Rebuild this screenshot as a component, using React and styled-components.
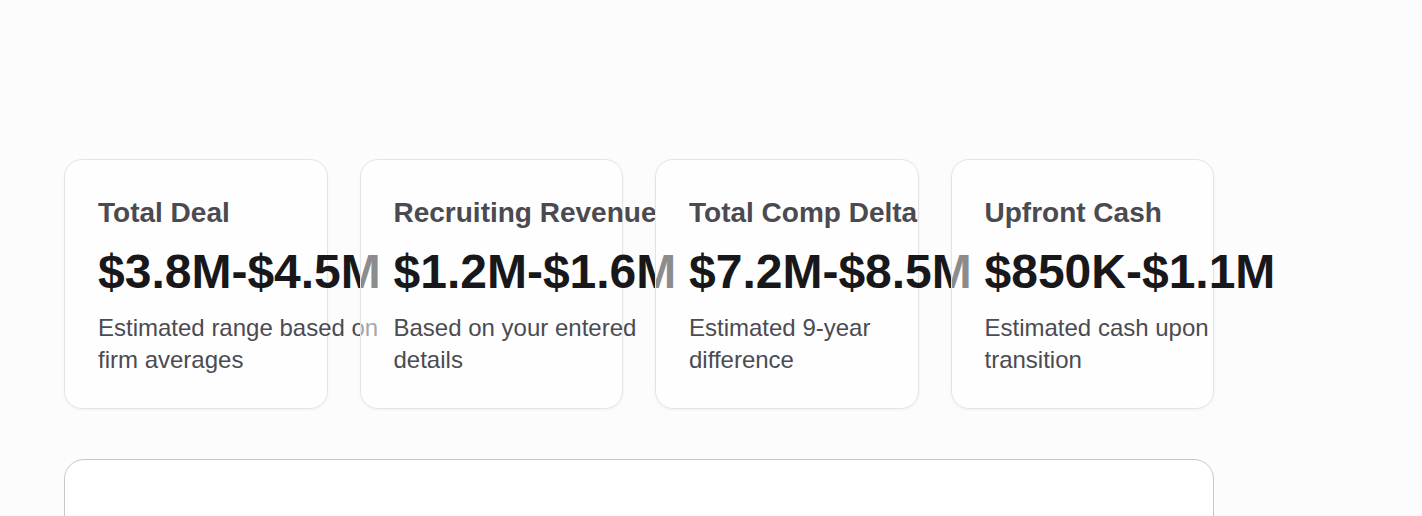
import React from 'react'
import styled, { createGlobalStyle } from 'styled-components'

const GlobalStyle = createGlobalStyle`
  html, body {
    margin: 0;
    padding: 0;
    background: #fcfcfc;
    font-family: "Liberation Sans", Arial, sans-serif;
  }
`

const Page = styled.div`
  height: 516px;
  padding: 159px 0 0 64px;
  box-sizing: border-box;
  overflow: hidden;
`

const Content = styled.div`
  width: 1150px;
  display: flex;
  flex-direction: column;
  gap: 50px;
`

const CardGrid = styled.div`
  display: grid;
  grid-template-columns: repeat(4, 1fr);
  gap: 32px;
`

const StatCard = styled.div`
  min-width: 0;
  height: 250px;
  box-sizing: border-box;
  padding: 35px 33px 0;
  border: 1px solid #e4e4e7;
  border-radius: 18px;
  background: rgba(255, 255, 255, 0.5);
  box-shadow: 0 1px 3px rgba(0, 0, 0, 0.05);
`

const Label = styled.div`
  font-size: 28px;
  line-height: 36px;
  font-weight: 700;
  color: #4a4a50;
  white-space: nowrap;
`

const Value = styled.div`
  margin-top: 13px;
  font-size: 48px;
  line-height: 56px;
  font-weight: 700;
  color: #18181b;
  white-space: nowrap;
`

const Note = styled.p`
  margin: 12px 0 0;
  width: 290px;
  font-size: 24px;
  line-height: 32px;
  color: #4b4b52;
`

const Panel = styled.div`
  height: 120px;
  border: 1.5px solid #c8c8cc;
  border-radius: 20px;
  background: #ffffff;
`

const stats = [
  { label: 'Total Deal', value: '$3.8M-$4.5M', note: 'Estimated range based on firm averages' },
  { label: 'Recruiting Revenue', value: '$1.2M-$1.6M', note: 'Based on your entered details' },
  { label: 'Total Comp Delta', value: '$7.2M-$8.5M', note: 'Estimated 9-year difference' },
  { label: 'Upfront Cash', value: '$850K-$1.1M', note: 'Estimated cash upon transition' },
]

function App() {
  return (
    <>
      <GlobalStyle />
      <Page>
        <Content>
          <CardGrid>
            {stats.map((s) => (
              <StatCard key={s.label}>
                <Label>{s.label}</Label>
                <Value>{s.value}</Value>
                <Note>{s.note}</Note>
              </StatCard>
            ))}
          </CardGrid>
          <Panel />
        </Content>
      </Page>
    </>
  )
}

export default App
